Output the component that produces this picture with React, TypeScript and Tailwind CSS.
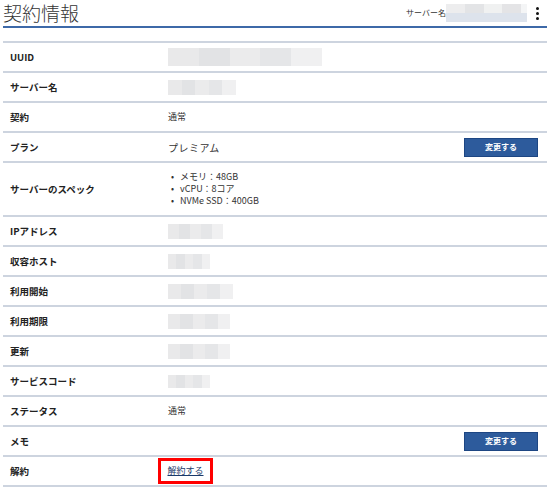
import React from 'react';

const font = { fontFamily: '"Noto Sans CJK JP", "Noto Sans", sans-serif' };

function Blur({ w, h = 'h-[15px]' }: { w: string; h?: string }) {
  return (
    <div className={`flex ${w} ${h} overflow-hidden`}>
      <div className="flex-1 bg-[#e9e9ea]" />
      <div className="flex-1 bg-[#e2e3e5]" />
      <div className="flex-1 bg-[#ebebec]" />
      <div className="flex-1 bg-[#e5e6e8]" />
      <div className="flex-1 bg-[#f0f0f1]" />
    </div>
  );
}

function ChangeButton() {
  return (
    <button className="ml-auto mr-[9px] h-[19px] w-[74px] border border-[#1d4683] bg-[#2d5b9c] text-[8px] font-bold text-white">
      変更する
    </button>
  );
}

function Row({ label, children, tall }: { label: string; children?: React.ReactNode; tall?: boolean }) {
  return (
    <div className={`flex items-center border-t-2 border-[#cdd4df] ${tall ? 'h-[54px]' : 'h-[30px]'}`}>
      <div className="w-[165px] pl-[7px] text-[9.5px] font-bold text-[#222]">{label}</div>
      <div className="flex flex-1 items-center text-[9px] text-[#333]">{children}</div>
    </div>
  );
}

export default function App() {
  const specs = ['メモリ：48GB', 'vCPU：8コア', 'NVMe SSD：400GB'];
  return (
    <div className="h-[489px] w-[550px] bg-white px-[3px]" style={font}>
      <div className="flex h-[26px] items-start">
        <h1 className="text-[19px] font-light leading-[25px] text-[#333]">契約情報</h1>
        <div className="ml-auto mt-[4px] flex items-center">
          <span className="text-[8px] text-[#333]">サーバー名</span>
          <div className="flex h-[18px] w-[81px] flex-col">
            <div className="flex h-[9px]">
              <div className="flex-1 bg-[#ededee]" />
              <div className="flex-1 bg-[#e3e4e6]" />
              <div className="flex-1 bg-[#f0f1f1]" />
              <div className="flex-1 bg-[#e4e4e6]" />
              <div className="w-[6px] bg-[#f4f5f6]" />
            </div>
            <div className="h-[9px] bg-[#dde3ec]" />
          </div>
          <div className="ml-[9px] mr-[8px] flex flex-col gap-[2px]">
            <span className="block h-[3px] w-[3px] rounded-full bg-[#111]" />
            <span className="block h-[3px] w-[3px] rounded-full bg-[#111]" />
            <span className="block h-[3px] w-[3px] rounded-full bg-[#111]" />
          </div>
        </div>
      </div>
      <div className="h-[2px] bg-[#3d69a8]" />
      <div className="h-[13px]" />
      <div className="border-b-2 border-[#cdd4df]">
        <Row label="UUID">
          <Blur w="w-[154px]" h="h-[18px]" />
        </Row>
        <Row label="サーバー名">
          <Blur w="w-[68px]" />
        </Row>
        <Row label="契約">通常</Row>
        <Row label="プラン">
          <span className="text-[10px] tracking-[0.5px]">プレミアム</span>
          <ChangeButton />
        </Row>
        <Row label="サーバーのスペック" tall>
          <ul className="ml-[3px] text-[9px] leading-[12px]">
            {specs.map((s) => (
              <li key={s} className="flex">
                <span className="w-[9px]">•</span>
                <span>{s}</span>
              </li>
            ))}
          </ul>
        </Row>
        <Row label="IPアドレス">
          <Blur w="w-[55px]" />
        </Row>
        <Row label="収容ホスト">
          <Blur w="w-[42px]" />
        </Row>
        <Row label="利用開始">
          <Blur w="w-[65px]" />
        </Row>
        <Row label="利用期限">
          <Blur w="w-[62px]" />
        </Row>
        <Row label="更新">
          <Blur w="w-[62px]" />
        </Row>
        <Row label="サービスコード">
          <Blur w="w-[42px]" h="h-[13px]" />
        </Row>
        <Row label="ステータス">通常</Row>
        <Row label="メモ">
          <ChangeButton />
        </Row>
        <Row label="解約">
          <div className="-ml-[10px] flex h-[26px] w-[55px] items-center justify-center border-[3px] border-[#ff0000]">
            <a href="#" className="text-[9px] text-[#1a3a6a] underline">
              解約する
            </a>
          </div>
        </Row>
      </div>
    </div>
  );
}
